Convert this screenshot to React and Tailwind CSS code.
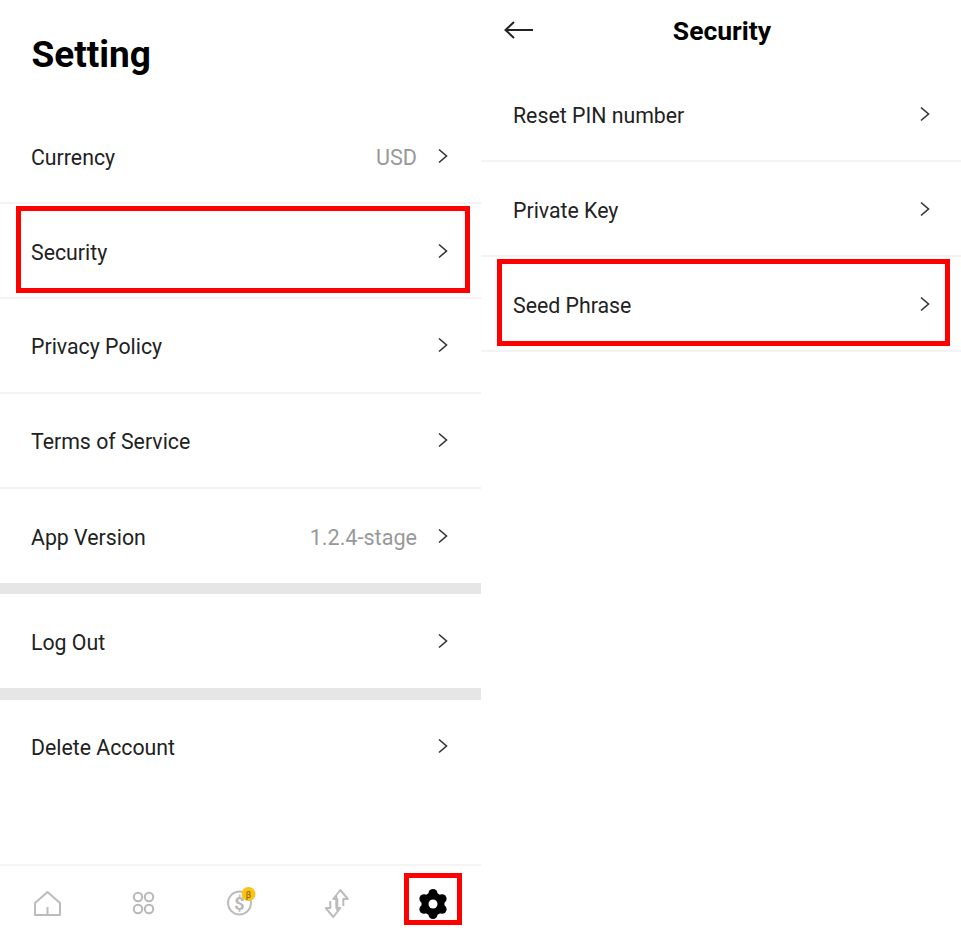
import React from "react";

const settingRows = [
  { label: "Currency", value: "USD" },
  { label: "Security", boxed: true },
  { label: "Privacy Policy" },
  { label: "Terms of Service" },
  { label: "App Version", value: "1.2.4-stage" },
];

const securityRows = [
  { label: "Reset PIN number" },
  { label: "Private Key" },
  { label: "Seed Phrase", boxed: true },
];

function Chevron() {
  return (
    <svg width="12" height="16" viewBox="0 0 12 16" fill="none" className="shrink-0">
      <path d="M2 1.5 L9.5 8 L2 14.5" stroke="#333333" strokeWidth="1.6" />
    </svg>
  );
}

function Row({ label, value, divider, boxed, className }) {
  return (
    <div className={`relative flex items-center justify-between ${divider ? "border-b-2 border-[#f3f3f3]" : ""} ${className}`}>
      <span className="pt-[4px] text-[21.3px] text-[#222222]">{label}</span>
      <div className="flex items-center gap-[20px]">
        {value && <span className="pt-[4px] text-[21.6px] text-[#999999]">{value}</span>}
        <Chevron />
      </div>
      {boxed && <div className="absolute left-[16px] right-[11px] top-[2px] h-[87px] border-[5px] border-[#ff0000]" />}
    </div>
  );
}

function BottomNav() {
  return (
    <div className="relative grid grid-cols-5 h-[71px] border-t-2 border-[#f5f5f5] pt-[18px] justify-items-center items-start">
      <svg width="40" height="40" viewBox="0 0 40 40" fill="none" stroke="#bcbcbc" strokeWidth="2">
        <path d="M7 31 V19 L19.5 8 L32 19 V31 Z M19.5 31 V23" strokeLinejoin="round" />
      </svg>
      <svg width="40" height="40" viewBox="0 0 40 40" fill="none" stroke="#b8b8b8" strokeWidth="2">
        <circle cx="14" cy="13" r="4.2" />
        <circle cx="25" cy="13" r="4.2" />
        <circle cx="14" cy="25" r="4.2" />
        <circle cx="25" cy="25" r="4.2" />
      </svg>
      <svg width="40" height="40" viewBox="0 0 40 40" fill="none">
        <circle cx="19.5" cy="19" r="11.5" stroke="#bcbcbc" strokeWidth="2" />
        <text x="19.5" y="25.5" textAnchor="middle" fontSize="18" fontWeight="700" fill="#b8b8b8" fontFamily="Roboto, sans-serif">$</text>
        <circle cx="28.5" cy="10" r="7" fill="#fbc318" />
        <text x="28.5" y="13.5" textAnchor="middle" fontSize="9" fill="#7a5a00" fontFamily="Roboto, sans-serif">β</text>
      </svg>
      <svg width="40" height="40" viewBox="0 0 40 40" fill="none" stroke="#bcbcbc" strokeWidth="2">
        <path d="M20.3 27 V15 H16.3 L23.3 6 L30.8 15 H26.3 V22" strokeLinejoin="round" />
        <path d="M19.3 12 V24 H23.3 L16.3 33 L8.8 24 H13.3 V17" strokeLinejoin="round" />
      </svg>
      <svg width="40" height="40" viewBox="0 0 40 40">
        <g fill="#000000">
          <circle cx="20" cy="9.5" r="4.5" />
          <circle cx="20" cy="30.5" r="4.5" />
          <circle cx="10.9" cy="14.8" r="4.5" />
          <circle cx="29.1" cy="14.8" r="4.5" />
          <circle cx="10.9" cy="25.2" r="4.5" />
          <circle cx="29.1" cy="25.2" r="4.5" />
          <circle cx="20" cy="20" r="11.5" />
        </g>
        <circle cx="20" cy="20" r="4.5" fill="#ffffff" />
      </svg>
      <div className="absolute left-[404px] top-[7px] w-[58px] h-[52px] border-[5px] border-[#ff0000]" />
    </div>
  );
}

export default function App() {
  return (
    <div className="flex w-[961px] h-[935px] bg-white overflow-hidden font-['Roboto',sans-serif]">
      {/* setting screen */}
      <div className="w-[481px] h-full flex flex-col">
        <div className="h-[109.5px] pl-[31.5px] pt-[33px]">
          <h1 className="text-[37px] leading-[44px] font-bold text-black">Setting</h1>
        </div>
        {settingRows.map((row, i) => (
          <Row key={row.label} {...row} divider={i < settingRows.length - 1} className="h-[94.75px] pl-[31px] pr-[32px]" />
        ))}
        <div className="h-[11px] bg-[#e6e6e6]" />
        <Row label="Log Out" className="h-[94px] pl-[31px] pr-[32px]" />
        <div className="h-[12px] bg-[#e6e6e6]" />
        <Row label="Delete Account" className="h-[92px] pl-[31px] pr-[32px]" />
        <div className="flex-1" />
        <BottomNav />
      </div>
      {/* security screen */}
      <div className="w-[480px] h-full flex flex-col">
        <div className="relative h-[67px] flex items-start justify-center pt-[14px] pl-[2px]">
          <svg width="32" height="20" viewBox="0 0 32 20" fill="none" className="absolute left-[22px] top-[20px]">
            <path d="M30 10 H3 M11 2 L2.5 10 L11 18" stroke="#222222" strokeWidth="2" />
          </svg>
          <span className="text-[26.5px] leading-[34px] font-bold text-black">Security</span>
        </div>
        {securityRows.map((row) => (
          <Row key={row.label} {...row} divider className="h-[95px] pl-[32px] pr-[30px]" />
        ))}
      </div>
    </div>
  );
}
